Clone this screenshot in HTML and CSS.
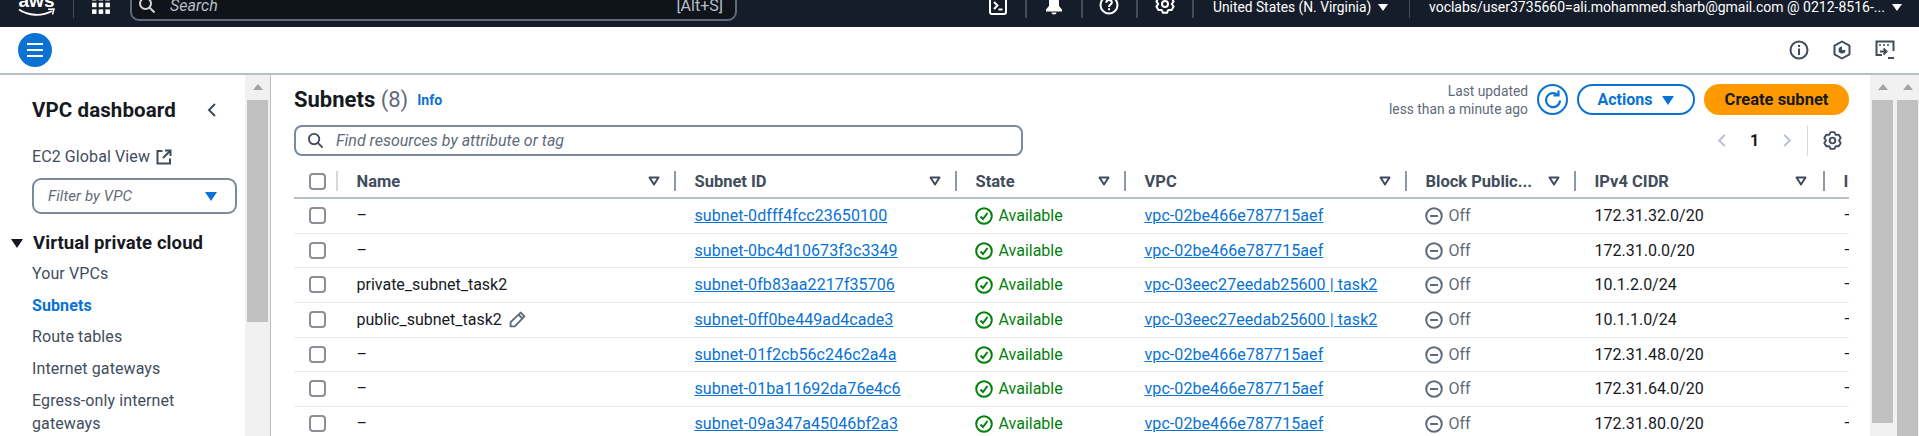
FILE: index.html
```html
<!DOCTYPE html>
<html lang="en">
<head>
    <meta charset="UTF-8">
    <title>Subnets | VPC Console</title>
    <link rel="stylesheet" href="styles.css">
</head>
<body>
    <header class="topbar">
        <div class="aws-logo">
            <span class="aws-text">aws</span>
            <svg class="aws-smile" width="37" height="9" viewBox="0 0 37 9"><path d="M1 1.500C10 8 24 8.500 34 3" fill="none" stroke="#fff" stroke-width="1.800"/><path d="M30 1.200L36 1L34.500 6.500" fill="none" stroke="#fff" stroke-width="1.500"/></svg>
        </div>
        <span class="top-sep top-sep-logo"></span>
        <svg class="grid-icon" width="18" height="18" viewBox="0 0 18 18" fill="#fff"><rect x="0" y="0" width="4.500" height="4.500"/><rect x="6.700" y="0" width="4.500" height="4.500"/><rect x="13.400" y="0" width="4.500" height="4.500"/><rect x="0" y="6.700" width="4.500" height="4.500"/><rect x="6.700" y="6.700" width="4.500" height="4.500"/><rect x="13.400" y="6.700" width="4.500" height="4.500"/><rect x="0" y="13.400" width="4.500" height="4.500"/><rect x="6.700" y="13.400" width="4.500" height="4.500"/><rect x="13.400" y="13.400" width="4.500" height="4.500"/></svg>
        <div class="top-search">
            <svg width="18" height="18" viewBox="0 0 18 18" fill="none" stroke="#d1d5db" stroke-width="2"><circle cx="7.500" cy="7.500" r="5.500"/><path d="M11.500 11.500L16.500 16.500"/></svg>
            <span class="top-search-text">Search</span>
            <span class="top-search-key">[Alt+S]</span>
        </div>
        <div class="top-icon top-icon-first">
            <svg width="18" height="20" viewBox="0 0 18 20" fill="none" stroke="#fff" stroke-width="2"><rect x="1" y="1" width="16" height="18" rx="2"/><path d="M5 7L8.500 10.500L5 14M9.500 14.500H13.500"/></svg>
        </div>
        <div class="top-icon">
            <svg width="18" height="20" viewBox="0 0 18 20" fill="#fff"><path d="M9 0.500C5.500 0.500 4 3 4 6.500V11L1 14.500V16.500H17V14.500L14 11V6.500C14 3 12.500 0.500 9 0.500Z"/><path d="M6.500 17.500H11.500C11.500 18.700 10.500 19.500 9 19.500C7.500 19.500 6.500 18.700 6.500 17.500Z"/></svg>
        </div>
        <div class="top-icon">
            <svg width="20" height="20" viewBox="0 0 20 20" fill="none" stroke="#fff" stroke-width="2"><circle cx="10" cy="10" r="8.500"/><path d="M7.300 7.700C7.300 6 8.500 5 10 5C11.600 5 12.800 6 12.800 7.500C12.800 9.500 10 9.700 10 12M10 13.300V15.300"/></svg>
        </div>
        <div class="top-icon">
            <svg class="top-gear" width="20" height="20" viewBox="0 0 20 20" fill="none" stroke="#fff" stroke-width="2" stroke-linejoin="round"><path d="M8 1.200H12L13.400 4.100L16.600 3.900L18.600 7.400L16.800 10L18.600 12.600L16.600 16.100L13.400 15.900L12 18.800H8L6.600 15.900L3.400 16.100L1.400 12.600L3.200 10L1.400 7.400L3.400 3.900L6.600 4.100Z"/><circle cx="10" cy="10" r="3"/></svg>
        </div>
        <div class="top-region">
            <span>United States (N. Virginia)</span>
            <span class="caret-white"></span>
        </div>
        <span class="top-sep"></span>
        <div class="top-account">
            <span>voclabs/user3735660=ali.mohammed.sharb@gmail.com @ 0212-8516-...</span>
            <span class="caret-white"></span>
        </div>
    </header>

    <div class="subbar">
        <button class="menu-btn">
            <svg width="18" height="16" viewBox="0 0 18 16" stroke="#fff" stroke-width="2.200"><path d="M1 2H17M1 8H17M1 14H17"/></svg>
        </button>
        <div class="subbar-icons">
            <svg width="20" height="20" viewBox="0 0 20 20" fill="none" stroke="#414d5c" stroke-width="2"><circle cx="10" cy="10" r="8.500"/><path d="M10 8.500V15M10 5V7"/></svg>
            <svg width="20" height="20" viewBox="0 0 20 20" fill="none" stroke="#414d5c" stroke-width="2"><path d="M10 1.500L17.500 5.700V14.300L10 18.500L2.500 14.300V5.700Z" stroke-linejoin="round"/><path d="M10 6.500A3.500 3.500 0 1 0 13.500 10H10Z" fill="#414d5c" stroke="none"/></svg>
            <svg width="20" height="20" viewBox="0 0 20 20" fill="none" stroke="#414d5c" stroke-width="2"><path d="M7 15H1.500V1.500H18.500V11"/><path d="M4 5H6M8 5H10M12 5H14" stroke-width="1.600"/><path d="M5 11.500H11M8.500 8.500L11.500 11.500L8.500 14.500"/><path d="M13 18H19"/></svg>
        </div>
    </div>

    <div class="content">
        <nav class="sidebar">
            <div class="side-title">
                <span>VPC dashboard</span>
                <svg width="10" height="16" viewBox="0 0 10 16" fill="none" stroke="#414d5c" stroke-width="2"><path d="M8 2L2 8L8 14"/></svg>
            </div>
            <div class="side-ec2">
                <span>EC2 Global View</span>
                <svg width="16" height="16" viewBox="0 0 16 16" fill="none" stroke="#414d5c" stroke-width="2"><path d="M6.500 2H1.500V14.500H14V9.500"/><path d="M9 1.500H14.500V7M14.500 1.500L7 9"/></svg>
            </div>
            <div class="side-filter">
                <span>Filter by VPC</span>
                <span class="caret-blue"></span>
            </div>
            <div class="side-section">
                <span class="caret-black"></span>
                <span>Virtual private cloud</span>
            </div>
            <ul class="side-list">
                <li>Your VPCs</li>
                <li class="active">Subnets</li>
                <li>Route tables</li>
                <li>Internet gateways</li>
                <li class="side-egress">Egress-only internet gateways</li>
            </ul>
        </nav>
        <div class="scroll scroll-side"><span class="scroll-up"></span><span class="thumb thumb-side"></span></div>

        <main class="main">
            <div class="head-row">
                <div class="head-title">
                    <h1>Subnets <span class="count">(8)</span></h1>
                    <a class="info">Info</a>
                </div>
                <div class="head-actions">
                    <div class="updated">Last updated<br>less than a minute ago</div>
                    <button class="refresh-btn">
                        <svg width="20" height="20" viewBox="0 0 20 20" fill="none" stroke="#0972d3" stroke-width="2.200"><path d="M17 10.500A7 7 0 1 1 14.600 4.800"/><path d="M15.500 0.500V5.500H10.500"/></svg>
                    </button>
                    <button class="actions-btn">Actions <span class="caret-blue"></span></button>
                    <button class="create-btn">Create subnet</button>
                </div>
            </div>

            <div class="tools-row">
                <div class="find-box">
                    <svg width="17" height="17" viewBox="0 0 18 18" fill="none" stroke="#414d5c" stroke-width="2"><circle cx="7.500" cy="7.500" r="5.500"/><path d="M11.500 11.500L16.500 16.500"/></svg>
                    <span>Find resources by attribute or tag</span>
                </div>
                <div class="pager">
                    <svg width="10" height="15" viewBox="0 0 10 16" fill="none" stroke="#b6bec9" stroke-width="2"><path d="M8 2L2 8L8 14"/></svg>
                    <span class="page-num">1</span>
                    <svg width="10" height="15" viewBox="0 0 10 16" fill="none" stroke="#b6bec9" stroke-width="2"><path d="M2 2L8 8L2 14"/></svg>
                    <span class="pager-sep"></span>
                    <svg width="19" height="19" viewBox="0 0 20 20" fill="none" stroke="#414d5c" stroke-width="2" stroke-linejoin="round"><path d="M8 1.200H12L13.400 4.100L16.600 3.900L18.600 7.400L16.800 10L18.600 12.600L16.600 16.100L13.400 15.900L12 18.800H8L6.600 15.900L3.400 16.100L1.400 12.600L3.200 10L1.400 7.400L3.400 3.900L6.600 4.100Z"/><circle cx="10" cy="10" r="3"/></svg>
                </div>
            </div>

            <div class="table-wrap">
                <svg class="defs" width="0" height="0">
                    <symbol id="sort" viewBox="0 0 12 10"><path d="M1.500 1.500H10.500L6 8.500Z" fill="none" stroke="#414d5c" stroke-width="2" stroke-linejoin="round"/></symbol>
                    <symbol id="ok" viewBox="0 0 18 18"><circle cx="9" cy="9" r="7.800" fill="none" stroke="#037f0c" stroke-width="2"/><path d="M5.500 9.500L8 12L12.500 6" fill="none" stroke="#037f0c" stroke-width="2"/></symbol>
                    <symbol id="off" viewBox="0 0 18 18"><circle cx="9" cy="9" r="7.800" fill="none" stroke="#5f6b7a" stroke-width="2"/><path d="M5 9H13" stroke="#5f6b7a" stroke-width="2"/></symbol>
                </svg>
                <table class="subnets">
                    <colgroup>
                        <col class="c-check"><col class="c-name"><col class="c-id"><col class="c-state"><col class="c-vpc"><col class="c-block"><col class="c-cidr"><col class="c-last">
                    </colgroup>
                    <thead>
                        <tr>
                            <th><div class="th-in th-check"><span class="check"></span></div></th>
                            <th><div class="th-in"><span>Name</span><svg class="sort"><use href="#sort"/></svg></div></th>
                            <th><div class="th-in"><span>Subnet ID</span><svg class="sort"><use href="#sort"/></svg></div></th>
                            <th><div class="th-in"><span>State</span><svg class="sort"><use href="#sort"/></svg></div></th>
                            <th><div class="th-in"><span>VPC</span><svg class="sort"><use href="#sort"/></svg></div></th>
                            <th><div class="th-in"><span>Block Public...</span><svg class="sort"><use href="#sort"/></svg></div></th>
                            <th><div class="th-in th-cidr"><span>IPv4 CIDR</span><svg class="sort"><use href="#sort"/></svg></div></th>
                            <th><div class="th-in th-last"><span>IPv6</span></div></th>
                        </tr>
                    </thead>
                    <tbody>
                        <tr>
                            <td><span class="check"></span></td><td>–</td>
                            <td><a>subnet-0dfff4fcc23650100</a></td>
                            <td class="avail"><svg class="status"><use href="#ok"/></svg>Available</td>
                            <td><a>vpc-02be466e787715aef</a></td>
                            <td class="off"><svg class="status"><use href="#off"/></svg>Off</td>
                            <td>172.31.32.0/20</td><td>–</td>
                        </tr>
                        <tr>
                            <td><span class="check"></span></td><td>–</td>
                            <td><a>subnet-0bc4d10673f3c3349</a></td>
                            <td class="avail"><svg class="status"><use href="#ok"/></svg>Available</td>
                            <td><a>vpc-02be466e787715aef</a></td>
                            <td class="off"><svg class="status"><use href="#off"/></svg>Off</td>
                            <td>172.31.0.0/20</td><td>–</td>
                        </tr>
                        <tr>
                            <td><span class="check"></span></td><td>private_subnet_task2</td>
                            <td><a>subnet-0fb83aa2217f35706</a></td>
                            <td class="avail"><svg class="status"><use href="#ok"/></svg>Available</td>
                            <td><a>vpc-03eec27eedab25600 | task2</a></td>
                            <td class="off"><svg class="status"><use href="#off"/></svg>Off</td>
                            <td>10.1.2.0/24</td><td>–</td>
                        </tr>
                        <tr>
                            <td><span class="check"></span></td>
                            <td>public_subnet_task2 <svg class="pencil" width="17" height="17" viewBox="0 0 16 16" fill="none" stroke="#5f6b7a" stroke-width="1.800"><path d="M11 1.500L14.500 5L5.500 14.500L1.500 14.500V10.500Z" stroke-linejoin="round"/><path d="M9 3.500L12.500 7"/></svg></td>
                            <td><a>subnet-0ff0be449ad4cade3</a></td>
                            <td class="avail"><svg class="status"><use href="#ok"/></svg>Available</td>
                            <td><a>vpc-03eec27eedab25600 | task2</a></td>
                            <td class="off"><svg class="status"><use href="#off"/></svg>Off</td>
                            <td>10.1.1.0/24</td><td>–</td>
                        </tr>
                        <tr>
                            <td><span class="check"></span></td><td>–</td>
                            <td><a>subnet-01f2cb56c246c2a4a</a></td>
                            <td class="avail"><svg class="status"><use href="#ok"/></svg>Available</td>
                            <td><a>vpc-02be466e787715aef</a></td>
                            <td class="off"><svg class="status"><use href="#off"/></svg>Off</td>
                            <td>172.31.48.0/20</td><td>–</td>
                        </tr>
                        <tr>
                            <td><span class="check"></span></td><td>–</td>
                            <td><a>subnet-01ba11692da76e4c6</a></td>
                            <td class="avail"><svg class="status"><use href="#ok"/></svg>Available</td>
                            <td><a>vpc-02be466e787715aef</a></td>
                            <td class="off"><svg class="status"><use href="#off"/></svg>Off</td>
                            <td>172.31.64.0/20</td><td>–</td>
                        </tr>
                        <tr>
                            <td><span class="check"></span></td><td>–</td>
                            <td><a>subnet-09a347a45046bf2a3</a></td>
                            <td class="avail"><svg class="status"><use href="#ok"/></svg>Available</td>
                            <td><a>vpc-02be466e787715aef</a></td>
                            <td class="off"><svg class="status"><use href="#off"/></svg>Off</td>
                            <td>172.31.80.0/20</td><td>–</td>
                        </tr>
                    </tbody>
                </table>
            </div>
        </main>

        <div class="scroll scroll-main"><span class="scroll-up"></span><span class="thumb thumb-main"></span></div>
        <div class="scroll scroll-page"><span class="scroll-up"></span><span class="thumb thumb-page"></span></div>
    </div>
</body>
</html>
```

FILE: styles.css
```css
* {
    box-sizing: border-box;
}
html {
    height: 436px;
    overflow: hidden;
}
body {
    margin: 0;
    height: 436px;
    overflow: hidden;
    font-family: Roboto, "Noto Sans", sans-serif;
    font-size: 16px;
    color: #16191f;
    background: #fff;
    display: flex;
    flex-direction: column;
}

/* top dark bar, its upper part is cut off in the window */
.topbar {
    height: 27px;
    flex-shrink: 0;
    background: #161d2a;
    color: #fff;
    overflow: hidden;
    display: flex;
    align-items: flex-end;
    padding: 0 0 6px 18px;
    font-size: 14px;
}
.aws-logo {
    width: 37px;
    height: 30px;
    display: flex;
    flex-direction: column;
    align-items: center;
    justify-content: flex-end;
    flex-shrink: 0;
    margin-bottom: 4px;
}
.aws-text {
    font-family: "Liberation Sans", sans-serif;
    font-weight: 700;
    font-size: 19px;
    line-height: 18px;
}
.aws-smile {
    margin-top: -2px;
}
.top-sep {
    width: 1px;
    height: 28px;
    background: #414d5c;
    flex-shrink: 0;
    margin-bottom: 3px;
}
.top-sep-logo {
    margin-left: 18px;
}
.grid-icon {
    margin: 0 20px 7px 18px;
    flex-shrink: 0;
}
.top-search {
    width: 607px;
    height: 40px;
    flex-shrink: 0;
    background: #0f141a;
    border: 2px solid #5f6b7a;
    border-radius: 9px;
    display: flex;
    align-items: flex-end;
    padding: 0 12px 4px 6px;
    color: #b6bec9;
    font-size: 16px;
}
.top-search svg {
    margin: 0 14px 1px 0;
}
.top-search-text {
    font-style: italic;
    flex: 1;
    line-height: 18px;
}
.top-search-key {
    line-height: 18px;
}
.top-icon {
    width: 55.670px;
    height: 28px;
    flex-shrink: 0;
    display: flex;
    justify-content: center;
    align-items: flex-end;
    border-right: 2px solid #414d5c;
    margin-bottom: 3px;
    padding-bottom: 3px;
}
.top-icon-first {
    margin-left: 233px;
    width: 57px;
}
.top-gear {
    margin-bottom: 1px;
}
.top-region, .top-account {
    display: flex;
    align-items: center;
    gap: 7px;
    line-height: 20px;
    white-space: nowrap;
    flex-shrink: 0;
    margin-bottom: 4px;
}
.top-region {
    margin-left: 19px;
    width: 196px;
    font-size: 13.800px;
}
.top-account {
    margin-left: 19px;
}
.caret-white {
    width: 0;
    height: 0;
    border-left: 5px solid transparent;
    border-right: 5px solid transparent;
    border-top: 7px solid #fff;
}

/* white bar under it */
.subbar {
    height: 48px;
    flex-shrink: 0;
    border-bottom: 2px solid #b6bec9;
    display: flex;
    align-items: center;
    justify-content: space-between;
    padding: 0 24px 0 18px;
}
.menu-btn {
    width: 34px;
    height: 34px;
    border: none;
    border-radius: 50%;
    background: #0972d3;
    padding: 0;
    display: flex;
    align-items: center;
    justify-content: center;
}
.subbar-icons {
    display: flex;
    align-items: center;
    gap: 23px;
}

.content {
    flex: 1;
    min-height: 0;
    display: flex;
}

/* left nav */
.sidebar {
    width: 245px;
    flex-shrink: 0;
    padding: 24px 0 0 32px;
    overflow: hidden;
    color: #414d5c;
    line-height: 22px;
    letter-spacing: 0.1px;
}
.side-title {
    display: flex;
    justify-content: space-between;
    align-items: center;
    padding-right: 28px;
    font-size: 20.500px;
    font-weight: 700;
    color: #16191f;
}
.side-ec2 {
    margin-top: 25px;
    display: flex;
    align-items: center;
    gap: 6px;
}
.side-filter {
    margin-top: 10px;
    width: 205px;
    height: 36px;
    border: 2px solid #7d8998;
    border-radius: 9px;
    display: flex;
    align-items: center;
    justify-content: space-between;
    padding: 0 18px 0 14px;
    font-style: italic;
    font-size: 15px;
    color: #5f6b7a;
}
.side-section {
    margin: 18px 0 0 -21px;
    display: flex;
    align-items: center;
    gap: 10px;
    font-size: 18.500px;
    font-weight: 700;
    color: #16191f;
}
.side-list {
    list-style: none;
    margin: 9px 0 0;
    padding: 0 20px 0 0;
}
.side-list li {
    margin-bottom: 9.500px;
}
.side-list .active {
    color: #0972d3;
    font-weight: 700;
}
.side-list .side-egress {
    line-height: 23px;
}
.caret-blue {
    display: inline-block;
    width: 0;
    height: 0;
    border-left: 6px solid transparent;
    border-right: 6px solid transparent;
    border-top: 9px solid #0972d3;
}
.caret-black {
    width: 0;
    height: 0;
    border-left: 6px solid transparent;
    border-right: 6px solid transparent;
    border-top: 9px solid #16191f;
}

/* the fake scrollbars */
.scroll {
    flex-shrink: 0;
    background: #f1f1f1;
    display: flex;
    flex-direction: column;
    align-items: center;
    padding-top: 9px;
}
.scroll-up {
    width: 0;
    height: 0;
    border-left: 5px solid transparent;
    border-right: 5px solid transparent;
    border-bottom: 6px solid #a3a3a3;
    margin-bottom: 10px;
}
.thumb {
    display: block;
    background: #c1c1c1;
}
.scroll-side {
    width: 26px;
    border-right: 1px solid #b6bec9;
}
.thumb-side {
    width: 21px;
    height: 222px;
}
.scroll-main {
    width: 25px;
}
.thumb-main {
    width: 21px;
    height: 323px;
}
.scroll-page {
    flex: 1;
    padding-left: 2px;
    padding-right: 1px;
}
.thumb-page {
    width: 21px;
    flex: 1;
}

/* main column */
.main {
    width: 1599px;
    flex-shrink: 0;
    padding: 9px 21px 0 23px;
    overflow: hidden;
}
.head-row {
    display: flex;
    justify-content: space-between;
    align-items: center;
    height: 31px;
}
.head-title {
    display: flex;
    align-items: center;
    gap: 9px;
}
h1 {
    margin: 0;
    font-size: 22px;
    font-weight: 700;
    line-height: 28px;
}
.count {
    font-weight: 400;
    color: #5f6b7a;
}
.info {
    font-size: 14px;
    font-weight: 700;
    color: #0972d3;
}
.head-actions {
    display: flex;
    align-items: center;
}
.updated {
    text-align: right;
    font-size: 13.800px;
    line-height: 18px;
    color: #5f6b7a;
    margin-right: 9px;
}
.refresh-btn {
    width: 31px;
    height: 31px;
    padding: 0;
    border: 2px solid #0972d3;
    border-radius: 50%;
    background: #fff;
    display: flex;
    align-items: center;
    justify-content: center;
    margin-right: 9px;
}
.actions-btn, .create-btn {
    height: 31px;
    border-radius: 16px;
    font-family: inherit;
    font-weight: 700;
    padding: 0;
}
.actions-btn {
    width: 118px;
    border: 2px solid #0972d3;
    background: #fff;
    color: #0972d3;
    margin-right: 9px;
    font-size: 16px;
}
.actions-btn .caret-blue {
    margin-left: 6px;
}
.create-btn {
    width: 145px;
    border: none;
    background: #ff9900;
    color: #16191f;
    font-size: 16.500px;
}
.tools-row {
    margin-top: 10px;
    display: flex;
    justify-content: space-between;
    align-items: center;
    height: 31px;
}
.find-box {
    width: 729px;
    height: 31px;
    border: 2px solid #7d8998;
    border-radius: 8px;
    display: flex;
    align-items: center;
    gap: 12px;
    padding-left: 11px;
    font-style: italic;
    font-size: 16px;
    color: #5f6b7a;
}
.pager {
    display: flex;
    align-items: center;
    height: 31px;
    padding-right: 7px;
}
.page-num {
    width: 55px;
    text-align: center;
    font-weight: 700;
    color: #16191f;
}
.pager-sep {
    width: 1px;
    height: 31px;
    background: #d5dbdb;
    margin: 0 15px;
}

/* table */
.table-wrap {
    margin-top: 8px;
    overflow: hidden;
}
.defs {
    position: absolute;
}
.subnets {
    table-layout: fixed;
    border-collapse: collapse;
    width: 1555px;
}
.c-check { width: 44px; }
.c-name { width: 338px; }
.c-id { width: 281px; }
.c-state { width: 169px; }
.c-vpc { width: 281px; }
.c-block { width: 169px; }
.c-cidr { width: 249px; }
.c-last { width: 24px; }
th {
    height: 34px;
    padding: 1px 0 0;
    border-bottom: 2px solid #b6bec9;
    text-align: left;
    font-size: 16.500px;
    font-weight: 700;
    color: #414d5c;
}
.th-in {
    height: 20px;
    padding: 0 14px 0 18.500px;
    border-right: 2px solid #8d99a8;
    display: flex;
    align-items: center;
    justify-content: space-between;
    white-space: nowrap;
}
.th-check {
    padding: 0 0 0 15px;
    border-right-color: #d5dbdb;
}
.th-cidr {
    padding-right: 16px;
}
.th-last {
    border-right: none;
    overflow: hidden;
    padding-right: 0;
}
.sort {
    width: 12px;
    height: 10px;
}
td {
    height: 35px;
    padding: 0 0 0 18.500px;
    border-bottom: 1px solid #e9ebed;
    white-space: nowrap;
    overflow: hidden;
}
tbody tr:nth-child(3n+2) td {
    height: 34px;
}
td:first-child {
    padding-left: 15px;
}
td a {
    color: #0972d3;
    text-decoration: underline;
    letter-spacing: 0.080px;
}
.check {
    display: block;
    width: 17px;
    height: 17px;
    border: 2px solid #8d8d96;
    border-radius: 4px;
}
.avail {
    color: #037f0c;
}
.off {
    color: #5f6b7a;
}
.status {
    width: 18px;
    height: 18px;
    margin: 0 6px 0 -1px;
    vertical-align: -4px;
}
.pencil {
    vertical-align: -3px;
    margin-left: 3px;
}
```
